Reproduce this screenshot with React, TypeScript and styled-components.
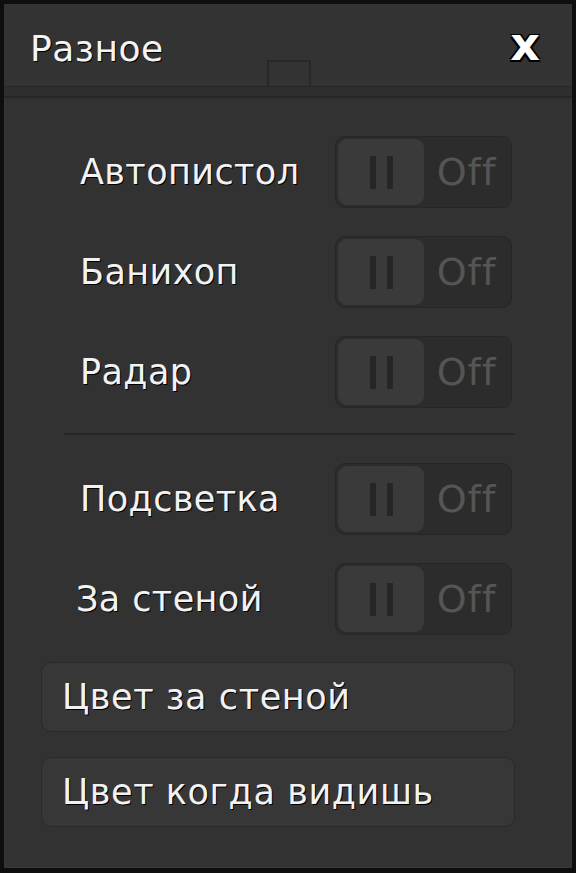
import React from "react";
import styled, { createGlobalStyle } from "styled-components";

const GlobalStyle = createGlobalStyle`
  html, body {
    margin: 0;
    padding: 0;
    background: #0e0e0e;
  }
  body {
    font-family: "DejaVu Sans", Verdana, sans-serif;
  }
`;

const Panel = styled.div`
  box-sizing: border-box;
  margin: 4px 4px 5px 4px;
  width: 568px;
  height: 864px;
  background: #323232;
  box-shadow: inset 0 0 0 1px #383838;
  display: flex;
  flex-direction: column;
`;

const Header = styled.div`
  position: relative;
  box-sizing: border-box;
  height: 82px;
  padding: 6px 32px 0 26px;
  display: flex;
  align-items: center;
  justify-content: space-between;
  background: #333333;
`;

const Title = styled.span`
  color: #f4f4f4;
  font-size: 36px;
  letter-spacing: 0.5px;
  text-shadow: 1px 1px 0 #000;
`;

const Close = styled.span`
  color: #ffffff;
  font-size: 46px;
  font-weight: bold;
  line-height: 1;
  margin-top: -8px;
  text-shadow: -1.5px -1.5px 0 #000, 1.5px -1.5px 0 #000, -1.5px 1.5px 0 #000, 1.5px 1.5px 0 #000;
`;

const Grip = styled.div`
  position: absolute;
  left: 263px;
  bottom: 0;
  width: 44px;
  height: 26px;
  box-sizing: border-box;
  border: 2px solid #282828;
  border-bottom: none;
`;

const HeaderEdge = styled.div`
  height: 9px;
  background: #2e2e2e;
  border-top: 1px solid #262626;
  border-bottom: 2px solid #272727;
`;

const Body = styled.div`
  display: flex;
  flex-direction: column;
  padding: 39px 57px 0 37px;
`;

const Group = styled.div`
  display: flex;
  flex-direction: column;
  gap: 30px;
`;

const Row = styled.div<{ $indent: number }>`
  height: 70px;
  display: flex;
  align-items: center;
  justify-content: space-between;
  padding: 0 3px 0 ${(p) => p.$indent}px;
`;

const Label = styled.span`
  color: #f2f2f2;
  font-size: 35px;
  letter-spacing: 0.4px;
  text-shadow: 1px 1px 0 #000;
`;

const Toggle = styled.div`
  box-sizing: border-box;
  width: 177px;
  height: 72px;
  padding: 2px;
  display: flex;
  border-radius: 10px;
  background: #2c2c2c;
  border: 1px solid #262626;
`;

const Knob = styled.div`
  width: 86px;
  height: 100%;
  border-radius: 9px;
  background: #3a3a3a;
  display: flex;
  align-items: center;
  justify-content: center;
  gap: 11px;
`;

const Bar = styled.div`
  width: 6px;
  height: 33px;
  background: #262626;
`;

const Off = styled.span`
  flex: 1;
  display: flex;
  align-items: center;
  justify-content: center;
  color: #555555;
  font-size: 38px;
  letter-spacing: 1px;
`;

const Rule = styled.div`
  height: 2px;
  margin: 26px 0 29px 23px;
  background: #262626;
`;

const Buttons = styled.div`
  display: flex;
  flex-direction: column;
  gap: 25px;
  margin-top: 28px;
`;

const Button = styled.div`
  box-sizing: border-box;
  height: 70px;
  padding: 0 20px;
  display: flex;
  align-items: center;
  border-radius: 10px;
  background: #373737;
  border: 1px solid #2a2a2a;
  color: #f2f2f2;
  font-size: 35px;
  letter-spacing: 0.6px;
  text-shadow: 1px 1px 0 #000;
`;

const Switch = () => (
  <Toggle>
    <Knob>
      <Bar />
      <Bar />
    </Knob>
    <Off>Off</Off>
  </Toggle>
);

const App = () => {
  return (
    <>
      <GlobalStyle />
      <Panel>
        <Header>
          <Title>Разное</Title>
          <Close>x</Close>
          <Grip />
        </Header>
        <HeaderEdge />
        <Body>
          <Group>
            <Row $indent={39}>
              <Label>Автопистол</Label>
              <Switch />
            </Row>
            <Row $indent={39}>
              <Label>Банихоп</Label>
              <Switch />
            </Row>
            <Row $indent={39}>
              <Label>Радар</Label>
              <Switch />
            </Row>
          </Group>
          <Rule />
          <Group>
            <Row $indent={39}>
              <Label>Подсветка</Label>
              <Switch />
            </Row>
            <Row $indent={35}>
              <Label>За стеной</Label>
              <Switch />
            </Row>
          </Group>
          <Buttons>
            <Button>Цвет за стеной</Button>
            <Button>Цвет когда видишь</Button>
          </Buttons>
        </Body>
      </Panel>
    </>
  );
};

export default App;
